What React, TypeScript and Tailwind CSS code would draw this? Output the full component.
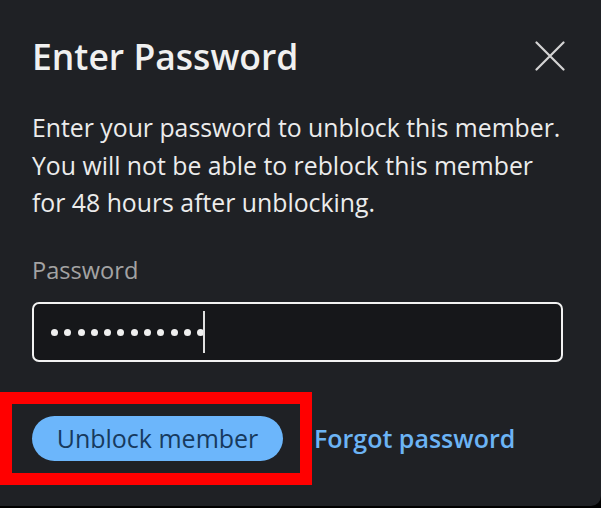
import React from "react";

export default function App() {
  const dots = Array.from({ length: 12 });
  return (
    <div className="w-[601px] h-[508px] bg-black" style={{ fontFamily: '"Open Sans", "Noto Sans", sans-serif' }}>
      <div className="relative w-[601px] h-[506px] bg-[#1f2125] rounded-br-[10px] px-8 pt-[38px]">
        <div className="flex items-center justify-between h-[36px]">
          <h1 className="text-[35.5px] leading-[36px] font-semibold text-[#f0f0f0]">Enter Password</h1>
          <svg width="30" height="30" viewBox="0 0 30 30" className="mr-[4px]">
            <path d="M1.5 1.5 L28.5 28.5 M28.5 1.5 L1.5 28.5" stroke="#d4d4d4" strokeWidth="2.2" strokeLinecap="round" />
          </svg>
        </div>
        <p className="mt-[35px] text-[24.8px] leading-[37.5px] text-[#ececec] whitespace-nowrap">
          Enter your password to unblock this member.
          <br />
          You will not be able to reblock this member
          <br />
          for 48 hours after unblocking.
        </p>
        <div className="mt-[33.5px] text-[23.6px] leading-[30px] text-[#a3a3a3]">Password</div>
        <div className="mt-[17px] h-[60px] w-[531px] rounded-[7px] border-2 border-[#f2f2f2] bg-[#16171a] flex items-center pl-[17px]">
          <div className="flex items-center gap-[6.3px]">
            {dots.map((_, i) => (
              <span key={i} className="block w-[7px] h-[7px] rounded-full bg-[#f0f0f0]" />
            ))}
          </div>
          <span className="block w-[1.5px] h-[42px] bg-[#e0e0e0] -ml-[1px]" />
        </div>
        <div className="mt-[54px] flex items-center">
          <button className="h-[45px] w-[251px] rounded-full bg-[#6cb6fb] text-[#173a5e] text-[25px] font-medium leading-none flex items-center justify-center pb-[1px]">
            Unblock member
          </button>
          <a className="ml-[31px] text-[25px] font-semibold text-[#6cb4f5]">Forgot password</a>
        </div>
        <div className="absolute left-0 top-[392px] w-[312px] h-[93px] border-[12px] border-[#ff0000]" />
      </div>
    </div>
  );
}
